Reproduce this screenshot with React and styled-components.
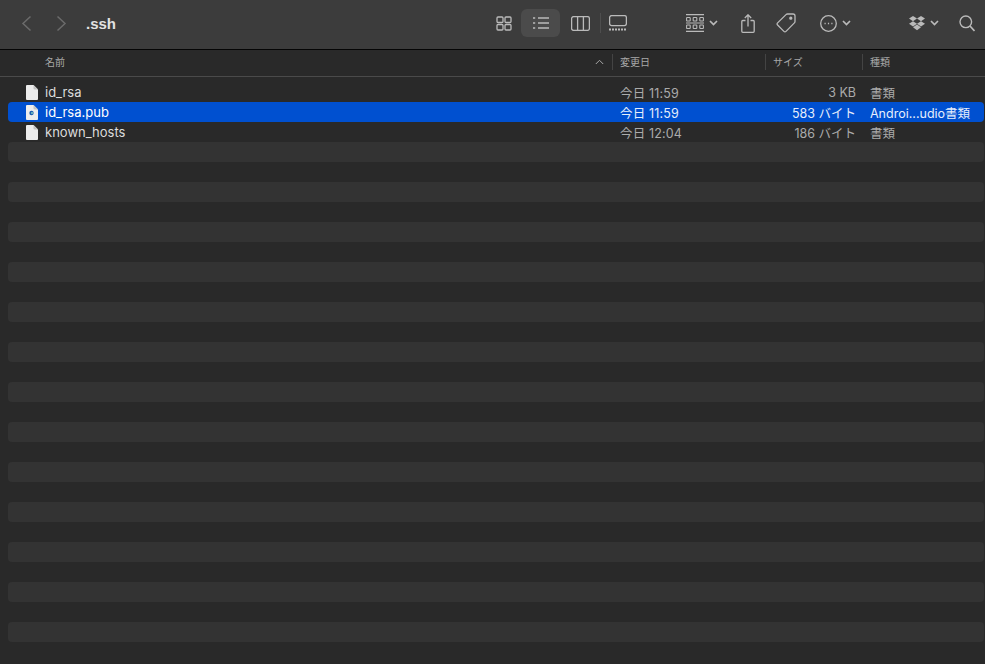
import React from "react";
import styled, { createGlobalStyle } from "styled-components";

const GlobalStyle = createGlobalStyle`
  html, body {
    margin: 0;
    padding: 0;
    background: #292929;
  }
  body {
    font-family: "Inter", "Liberation Sans", "Noto Sans CJK JP", sans-serif;
  }
`;

const Window = styled.div`
  width: 985px;
  height: 664px;
  overflow: hidden;
  display: flex;
  flex-direction: column;
  background: #292929;
`;

const Toolbar = styled.div`
  height: 49px;
  flex: none;
  box-sizing: content-box;
  display: flex;
  align-items: center;
  background: #3c3c3c;
  border-bottom: 1px solid #050505;
`;

const ToolRow = styled.div`
  flex: 1;
  height: 46px;
  margin-bottom: 3px;
  display: flex;
  align-items: center;
`;

const ToolIcon = styled.button`
  flex: none;
  width: ${({ w }) => w}px;
  height: 28px;
  margin-left: ${({ gap }) => gap || 0}px;
  padding: 0;
  border: none;
  border-radius: 6px;
  background: ${({ active }) => (active ? "#4b4b4b" : "transparent")};
  color: ${({ dim }) => (dim ? "#6b6b6b" : "#bababa")};
  display: flex;
  align-items: center;
  justify-content: center;
  gap: 5px;
`;

const Title = styled.div`
  flex: none;
  width: 410px;
  margin-left: 19px;
  color: #e2e2e2;
  font-size: 15px;
  font-weight: 700;
  font-family: "Liberation Sans", sans-serif;
`;

const Separator = styled.div`
  flex: none;
  width: 1px;
  height: 20px;
  background: #4e4e4e;
  margin-left: 10px;
`;

const Header = styled.div`
  height: 27px;
  flex: none;
  box-sizing: border-box;
  padding-bottom: 3px;
  display: flex;
  align-items: center;
  background: #292929;
  border-bottom: 1px solid #4a4a4a;
  color: #a8a8a8;
  font-size: 10px;
`;

const HeaderCell = styled.div`
  flex: none;
  width: ${({ w }) => w}px;
  height: 16px;
  box-sizing: border-box;
  padding-left: ${({ pad }) => pad}px;
  border-left: ${({ first }) => (first ? "none" : "1px solid #444444")};
  display: flex;
  align-items: center;
  justify-content: space-between;
`;

const Rows = styled.div`
  flex: 1;
  padding: 5px 1px 0 8px;
  display: flex;
  flex-direction: column;
`;

const Row = styled.div`
  height: 20px;
  flex: none;
  display: flex;
  align-items: center;
  border-radius: 4px;
  font-size: 12.5px;
  color: ${({ selected }) => (selected ? "#e6eefc" : "#ababab")};
  background: ${({ selected, striped }) =>
    selected ? "#0050d0" : striped ? "#333333" : "transparent"};
`;

const NameCell = styled.div`
  flex: none;
  width: 612px;
  box-sizing: border-box;
  padding-left: 18px;
  display: flex;
  align-items: center;
  gap: 7px;
  font-size: 13px;
  color: ${({ selected }) => (selected ? "#ffffff" : "#dcdcdc")};
`;

const DateCell = styled.div`
  flex: none;
  width: 100px;
  letter-spacing: 0.15px;
`;

const SizeCell = styled.div`
  flex: none;
  width: 136px;
  text-align: right;
`;

const KindCell = styled.div`
  flex: none;
  margin-left: 14px;
  white-space: nowrap;
`;

const Svg = styled.svg`
  display: block;
  flex: none;
  fill: none;
  stroke: currentColor;
`;

const Chevron = () => (
  <Svg width="9" height="6" viewBox="0 0 9 6" strokeWidth="1.7">
    <path d="M1 1l3.5 3.5L8 1" />
  </Svg>
);

const FileIcon = ({ badge }) => (
  <Svg width="12" height="15" viewBox="0 0 12 15" style={{ stroke: "none" }}>
    <path d="M1 0h6.5L12 4.5V14a1 1 0 0 1-1 1H1a1 1 0 0 1-1-1V1a1 1 0 0 1 1-1z" fill="#ededed" />
    <path d="M7.5 0L12 4.5H8.5a1 1 0 0 1-1-1z" fill="#c4c4c4" />
    {badge && <circle cx="5.5" cy="8" r="2.2" fill="#1d5fb0" />}
    {badge && <circle cx="6" cy="8" r="1" fill="#7fc8c0" />}
  </Svg>
);

const files = [
  { name: "id_rsa", date: "今日 11:59", size: "3 KB", kind: "書類" },
  { name: "id_rsa.pub", date: "今日 11:59", size: "583 バイト", kind: "Androi...udio書類", selected: true, badge: true },
  { name: "known_hosts", date: "今日 12:04", size: "186 バイト", kind: "書類" },
];

const emptyRows = Array.from({ length: 26 }, (_, i) => i);

export default function App() {
  return (
    <Window>
      <GlobalStyle />
      <Toolbar>
        <ToolRow>
          <ToolIcon w={12} gap={20} dim>
            <Svg width="11" height="17" viewBox="0 0 11 17" strokeWidth="1.5"><path d="M9.5 1.5L2 8.5l7.500 7" /></Svg>
          </ToolIcon>
          <ToolIcon w={12} gap={23} dim>
            <Svg width="11" height="17" viewBox="0 0 11 17" strokeWidth="1.5"><path d="M1.500 1.500L9 8.500l-7.500 7" /></Svg>
          </ToolIcon>
          <Title>.ssh</Title>
          <ToolIcon w={16}>
            <Svg width="16" height="15" viewBox="0 0 16 15" strokeWidth="1.300">
              <rect x="1" y="1" width="6" height="5.500" rx="1" />
              <rect x="9" y="1" width="6" height="5.500" rx="1" />
              <rect x="1" y="8.500" width="6" height="5.500" rx="1" />
              <rect x="9" y="8.500" width="6" height="5.500" rx="1" />
            </Svg>
          </ToolIcon>
          <ToolIcon w={39} gap={9} active>
            <Svg width="16" height="12" viewBox="0 0 16 12" strokeWidth="1.600">
              <path d="M5 1h11M5 6h11M5 11h11M0 1h2.200M0 6h2.200M0 11h2.200" />
            </Svg>
          </ToolIcon>
          <ToolIcon w={19} gap={11}>
            <Svg width="19" height="15" viewBox="0 0 19 15" strokeWidth="1.300">
              <rect x="0.600" y="0.600" width="17.800" height="13.800" rx="2" />
              <path d="M6.600 1v13M12.400 1v13" />
            </Svg>
          </ToolIcon>
          <Separator />
          <ToolIcon w={19} gap={7}>
            <Svg width="18" height="16" viewBox="0 0 18 16" strokeWidth="1.300">
              <rect x="0.600" y="0.600" width="16.800" height="10" rx="2" />
              <path d="M0 14.500h18" strokeWidth="2" strokeDasharray="2 1" />
            </Svg>
          </ToolIcon>
          <ToolIcon w={33} gap={58}>
            <Svg width="18" height="18" viewBox="0 0 18 18" strokeWidth="1.100">
              <path d="M0 .6h18M0 17.400h18M0 9h18" />
              <rect x="0.600" y="3.500" width="3.600" height="3.500" rx=".6" />
              <rect x="7.200" y="3.500" width="3.600" height="3.500" rx=".6" />
              <rect x="13.800" y="3.500" width="3.600" height="3.500" rx=".6" />
              <rect x="0.600" y="11" width="3.600" height="3.500" rx=".6" />
              <rect x="7.200" y="11" width="3.600" height="3.500" rx=".6" />
              <rect x="13.800" y="11" width="3.600" height="3.500" rx=".6" />
            </Svg>
            <Chevron />
          </ToolIcon>
          <ToolIcon w={14} gap={23}>
            <Svg width="14" height="19" viewBox="0 0 14 19" strokeWidth="1.300">
              <path d="M4.500 6.500H1.800a1 1 0 0 0-1 1v9.800a1 1 0 0 0 1 1h10.400a1 1 0 0 0 1-1V7.500a1 1 0 0 0-1-1H9.500" />
              <path d="M7 12.500V1M3.800 4L7 .8 10.200 4" />
            </Svg>
          </ToolIcon>
          <ToolIcon w={20} gap={21}>
            <Svg width="20" height="20" viewBox="0 0 20 20" strokeWidth="1.300">
              <path d="M11.500 1H17a2 2 0 0 1 2 2v5.500a2 2 0 0 1-.6 1.400L10 18.400a1.500 1.500 0 0 1-2.100 0L1.600 12a1.500 1.500 0 0 1 0-2.100L10 1.600A2 2 0 0 1 11.500 1z" />
              <circle cx="14.800" cy="5.200" r="1" fill="currentColor" />
            </Svg>
          </ToolIcon>
          <ToolIcon w={33} gap={23}>
            <Svg width="17" height="17" viewBox="0 0 17 17" strokeWidth="1.300">
              <circle cx="8.500" cy="8.500" r="7.800" />
              <path d="M4.500 8.500h1.200M7.900 8.500h1.200M11.300 8.500h1.200" strokeWidth="1.500" />
            </Svg>
            <Chevron />
          </ToolIcon>
          <ToolIcon w={31} gap={56}>
            <Svg width="16" height="15" viewBox="0 0 16 15" style={{ stroke: "none", fill: "currentColor" }}>
              <path d="M4 0l4 2.600L4 5.200 0 2.600zM12 0l4 2.600-4 2.600-4-2.600zM4 5.200l4 2.600-4 2.600-4-2.600zM12 5.200l4 2.600-4 2.600-4-2.600zM8 8.600l4 2.600-4 3-4-3z" />
            </Svg>
            <Chevron />
          </ToolIcon>
          <ToolIcon w={16} gap={20}>
            <Svg width="16" height="17" viewBox="0 0 16 17" strokeWidth="1.400">
              <circle cx="6.800" cy="6.800" r="5.800" />
              <path d="M11 11l4.500 5" strokeWidth="1.700" />
            </Svg>
          </ToolIcon>
        </ToolRow>
      </Toolbar>
      <Header>
        <HeaderCell first w={612} pad={45}>
          名前
          <Svg width="9" height="6" viewBox="0 0 9 6" strokeWidth="1" style={{ marginRight: 8 }}><path d="M.8 5l3.700-3.700L8.200 5" /></Svg>
        </HeaderCell>
        <HeaderCell w={153} pad={7}>変更日</HeaderCell>
        <HeaderCell w={97} pad={7}>サイズ</HeaderCell>
        <HeaderCell w={100} pad={7}>種類</HeaderCell>
      </Header>
      <Rows>
        {files.map((f) => (
          <Row key={f.name} selected={f.selected}>
            <NameCell selected={f.selected}>
              <FileIcon badge={f.badge} />
              {f.name}
            </NameCell>
            <DateCell>{f.date}</DateCell>
            <SizeCell>{f.size}</SizeCell>
            <KindCell>{f.kind}</KindCell>
          </Row>
        ))}
        {emptyRows.map((i) => (
          <Row key={i} striped={i % 2 === 0} />
        ))}
      </Rows>
    </Window>
  );
}
